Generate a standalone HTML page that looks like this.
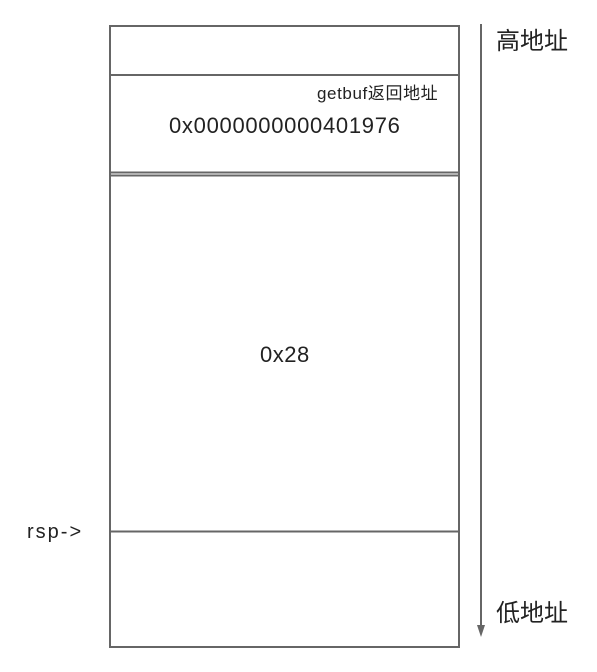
<!DOCTYPE html>
<html><head><meta charset="utf-8"><style>
html,body{margin:0;padding:0;background:#fff;}
body{width:597px;height:672px;position:relative;overflow:hidden;font-family:"Liberation Sans","Noto Sans CJK SC",sans-serif;color:#222;}
.t{position:absolute;white-space:nowrap;line-height:1;}
</style></head><body>
<svg width="597" height="672" style="position:absolute;left:0;top:0">
<g stroke="#666" stroke-width="2" fill="none">
<rect x="110" y="26" width="349" height="621"/>
<line x1="110" y1="75" x2="459" y2="75"/>
<line x1="110" y1="172.5" x2="459" y2="172.5"/>
<line x1="110" y1="175.5" x2="459" y2="175.5"/>
<line x1="110" y1="531.5" x2="459" y2="531.5"/>
<line x1="481" y1="24" x2="481" y2="628"/>
</g>
<polygon points="477,625 485,625 481,637" fill="#666"/>
</svg>
<div class="t" style="left:496px;top:30px;font-size:24px;">高地址</div>
<div class="t" style="left:496px;top:602px;font-size:24px;">低地址</div>
<div class="t" style="left:27px;top:522px;font-size:20px;letter-spacing:2px;">rsp-&gt;</div>
<div class="t" style="left:317px;top:85px;font-size:17px;letter-spacing:0.6px;">getbuf返回地址</div>
<div class="t" style="left:169px;top:115px;font-size:22px;letter-spacing:0.7px;">0x0000000000401976</div>
<div class="t" style="left:260px;top:344px;font-size:22px;letter-spacing:0.5px;">0x28</div>
</body></html>
